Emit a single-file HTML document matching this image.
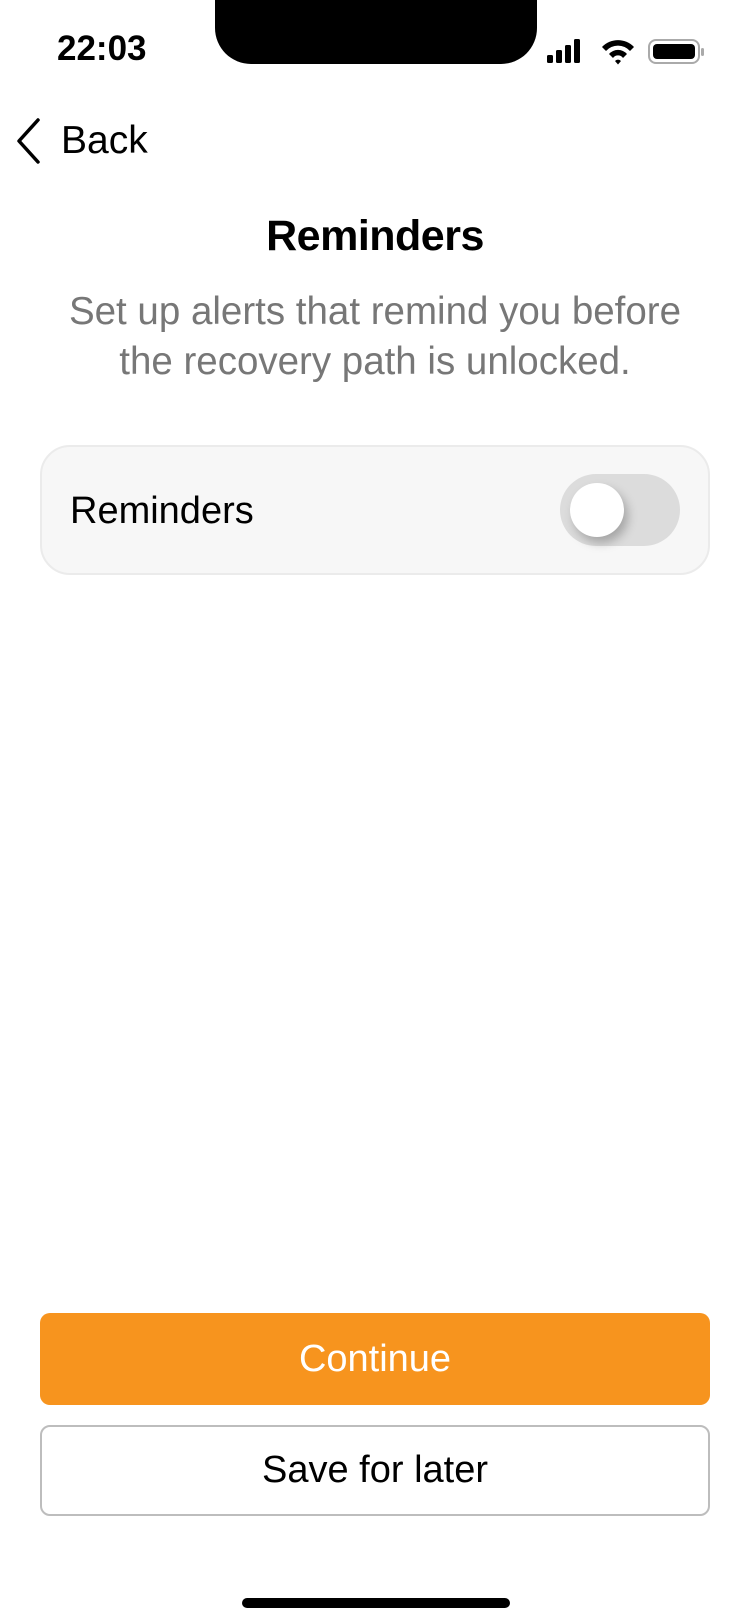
<!DOCTYPE html>
<html><head><meta charset="utf-8"><style>
*{margin:0;padding:0;box-sizing:border-box}
body{width:750px;height:1624px;background:#fff;font-family:"Liberation Sans",sans-serif;position:relative;overflow:hidden;color:#000}
.abs{position:absolute}
</style></head><body>
<div class="abs" style="left:57px;top:29px;font-size:35px;font-weight:bold;line-height:40px;">22:03</div>
<div class="abs" style="left:215px;top:-10px;width:322px;height:74px;background:#000;border-radius:0 0 36px 36px;"></div>
<svg class="abs" style="left:546px;top:38px" width="160" height="28" viewBox="0 0 160 28">
<rect x="1" y="17" width="6" height="8" rx="1.5" fill="#000"/>
<rect x="10" y="12" width="6" height="13" rx="1.5" fill="#000"/>
<rect x="19" y="7" width="6" height="18" rx="1.5" fill="#000"/>
<rect x="28" y="1" width="6" height="24" rx="1.5" fill="#000"/>
<g transform="translate(72,14)">
<path d="M-16 -5 A22 22 0 0 1 16 -5 L12 -1 A16 16 0 0 0 -12 -1 Z" fill="#000"/>
<path d="M-9 2 A12 12 0 0 1 9 2 L5 6 A6 6 0 0 0 -5 6 Z" fill="#000"/>
<path d="M-3 9 L0 12.5 L3 9 A4 4 0 0 0 -3 9 Z" fill="#000"/>
</g>
<rect x="103" y="2" width="50" height="23" rx="7" fill="none" stroke="#aaa" stroke-width="2"/>
<rect x="107" y="6" width="42" height="15" rx="4" fill="#000"/>
<rect x="155" y="10" width="3" height="8" rx="1.5" fill="#aaa"/>
</svg>
<svg class="abs" style="left:14px;top:117px" width="30" height="48" viewBox="0 0 30 48"><path d="M24 3 L5 24 L24 45" fill="none" stroke="#000" stroke-width="3.5" stroke-linecap="round" stroke-linejoin="round"/></svg>
<div class="abs" style="left:61px;top:118px;font-size:39px;line-height:46px;">Back</div>
<div class="abs" style="left:0;width:750px;top:211px;text-align:center;font-size:43px;font-weight:bold;line-height:50px;letter-spacing:-0.5px">Reminders</div>
<div class="abs" style="left:0;width:750px;top:287px;text-align:center;font-size:38.5px;line-height:50px;color:#777;">Set up alerts that remind you before<br>the recovery path is unlocked.</div>
<div class="abs" style="left:40px;top:445px;width:670px;height:130px;background:#f7f7f7;border:2px solid #ebebeb;border-radius:30px;"></div>
<div class="abs" style="left:70px;top:488px;font-size:38px;line-height:46px;">Reminders</div>
<div class="abs" style="left:560px;top:474px;width:120px;height:72px;background:#dcdcdc;border-radius:36px;"></div>
<div class="abs" style="left:570px;top:483px;width:54px;height:54px;background:#fff;border-radius:50%;box-shadow:4px 6px 10px rgba(0,0,0,0.25);"></div>
<div class="abs" style="left:40px;top:1313px;width:670px;height:92px;background:#f7941e;border-radius:10px;color:#fff;font-size:38px;line-height:92px;text-align:center;">Continue</div>
<div class="abs" style="left:40px;top:1425px;width:670px;height:91px;background:#fff;border:2px solid #bdbdbd;border-radius:10px;font-size:38px;line-height:87px;text-align:center;">Save for later</div>
<div class="abs" style="left:242px;top:1598px;width:268px;height:10px;background:#000;border-radius:5px;"></div>
</body></html>
